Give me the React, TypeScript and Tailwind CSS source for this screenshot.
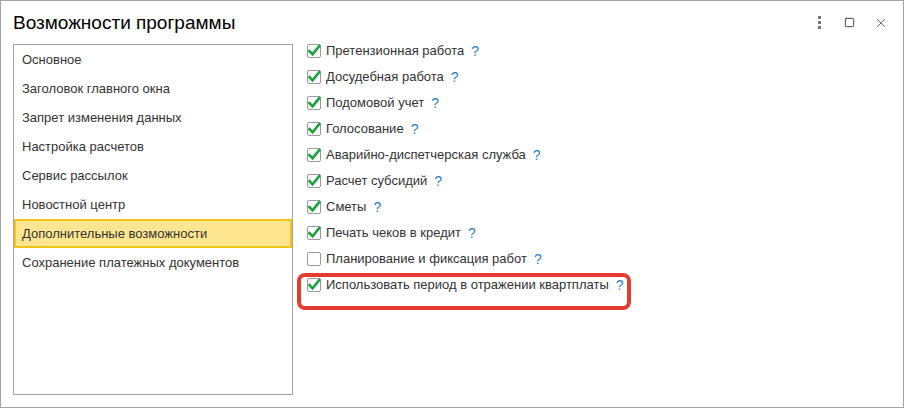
import { X, Square } from "lucide-react";

const sections = [
  "Основное",
  "Заголовок главного окна",
  "Запрет изменения данных",
  "Настройка расчетов",
  "Сервис рассылок",
  "Новостной центр",
  "Дополнительные возможности",
  "Сохранение платежных документов",
];

const options: { label: string; checked: boolean }[] = [
  { label: "Претензионная работа", checked: true },
  { label: "Досудебная работа", checked: true },
  { label: "Подомовой учет", checked: true },
  { label: "Голосование", checked: true },
  { label: "Аварийно-диспетчерская служба", checked: true },
  { label: "Расчет субсидий", checked: true },
  { label: "Сметы", checked: true },
  { label: "Печать чеков в кредит", checked: true },
  { label: "Планирование и фиксация работ", checked: false },
];

export default function App() {
  return (
    <div
      className="flex h-[408px] w-[904px] flex-col border border-[#a3a3a3] bg-white text-[#333]"
      style={{ fontFamily: '"Liberation Sans", Arial, sans-serif' }}
    >
      {/* Title bar */}
      <div className="flex h-[43px] shrink-0 items-center pl-[12px] pr-[15px]">
        <h1 className="flex-1 text-[19px] leading-none text-black">Возможности программы</h1>
        <div className="flex items-center">
          <div className="flex flex-col gap-[2px]">
            <span className="h-[3px] w-[3px] bg-[#777]" />
            <span className="h-[3px] w-[3px] bg-[#777]" />
            <span className="h-[3px] w-[3px] bg-[#777]" />
          </div>
          <Square className="ml-[23px] h-[11px] w-[11px] text-[#333]" strokeWidth={2} absoluteStrokeWidth />
          <X className="ml-[19px] h-[14px] w-[14px] text-[#444]" strokeWidth={1.3} absoluteStrokeWidth />
        </div>
      </div>

      {/* Body */}
      <div className="flex flex-1 items-start pl-[12px]">
        <ul className="mb-[12px] h-[351px] w-[280px] shrink-0 border border-[#a3a3a3] text-[13px]">
          {sections.map((s) => (
            <li
              key={s}
              className={
                s === "Дополнительные возможности"
                  ? "flex h-[29px] items-center border-2 border-[#f3c31c] bg-[#fde68f] pl-[6px]"
                  : "flex h-[29px] items-center pl-[8px]"
              }
            >
              {s}
            </li>
          ))}
        </ul>

        <div className="-mt-[6px] flex flex-col pl-[14px] text-[13px]">
          {options.map((o) => (
            <Option key={o.label} label={o.label} checked={o.checked} />
          ))}
          <div className="relative">
            <Option label="Использовать период в отражении квартплаты" checked />
            <div className="pointer-events-none absolute -left-[10px] top-[1px] h-[37px] w-[334px] rounded-[8px] border-4 border-[#e53a30]" />
          </div>
        </div>
      </div>
    </div>
  );
}

function Option({ label, checked }: { label: string; checked: boolean }) {
  return (
    <div className="flex h-[26px] items-center">
      <span className="flex h-[14px] w-[14px] items-center justify-center rounded-[2px] border border-[#9a9a9a] bg-white">
        {checked && (
          <svg viewBox="0 0 14 14" className="h-[14px] w-[14px] overflow-visible">
            <path d="M2.5 7.2 L5.6 10.4 L12.2 2.2" fill="none" stroke="#1ca23e" strokeWidth="2.6" strokeLinecap="square" />
          </svg>
        )}
      </span>
      <span className="ml-[5px]">{label}</span>
      <span className="ml-[7px] text-[14px] text-[#1f7fc8]">?</span>
    </div>
  );
}
